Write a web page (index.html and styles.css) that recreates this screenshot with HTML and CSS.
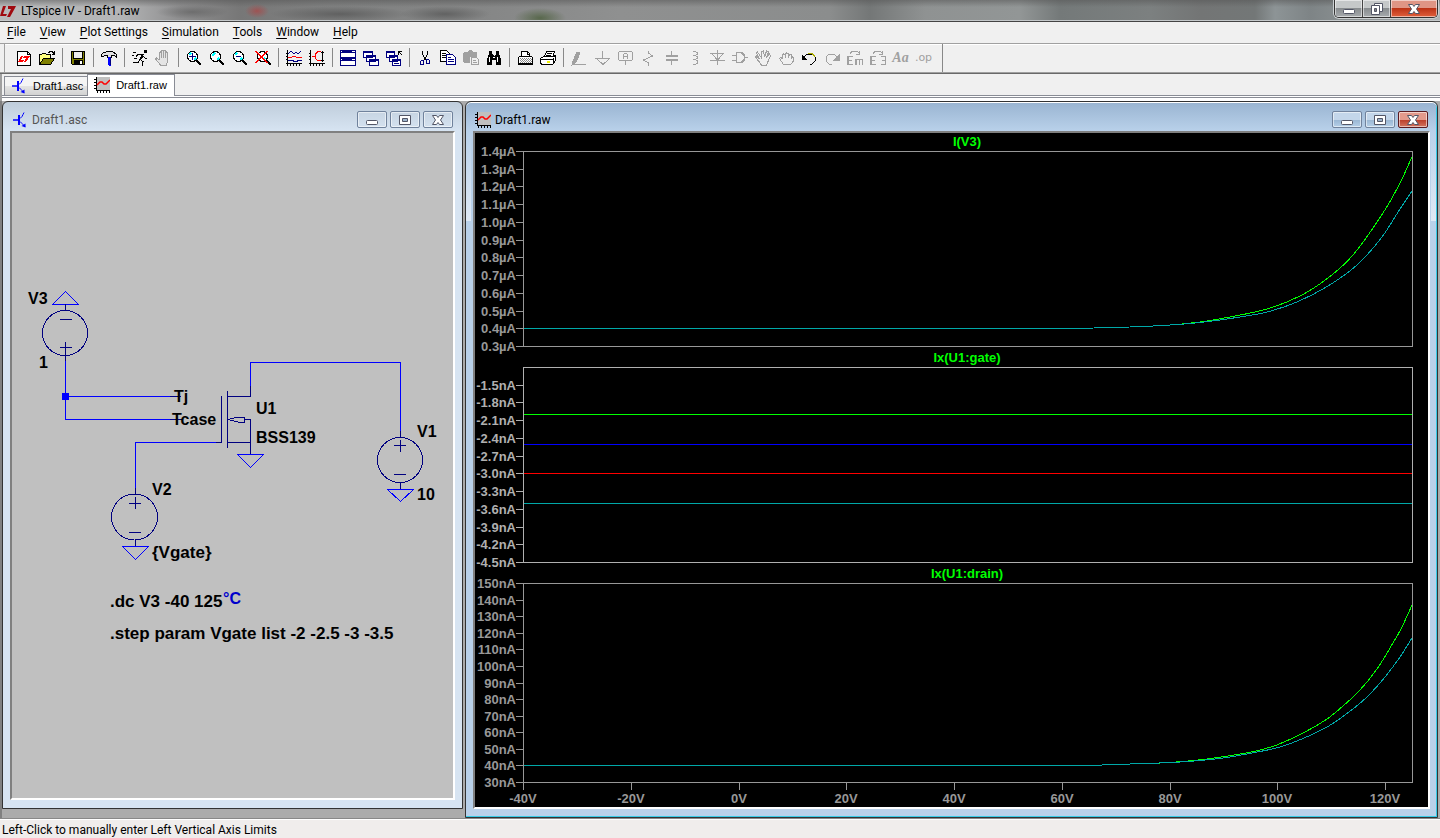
FILE: index.html
```html
<!DOCTYPE html>
<html lang="en">
<head>
<meta charset="utf-8">
<title>LTspice IV - Draft1.raw</title>
<link rel="stylesheet" href="styles.css">
</head>
<body>
<svg class="defs" aria-hidden="true">
  <symbol id="transistor" viewBox="0 0 16 16"><path d="M1 8h5" stroke="#00f" stroke-width="1.500"/><path d="M6 3h2v10H6z" fill="#00f"/><path d="M8 6.500l2-2 1-2 1-2M8 9.500l2 2 3 3" stroke="#00f" fill="none"/><path d="M9.500 14l4 1.500v-4z" fill="#00f"/></symbol>
  <symbol id="waveform" viewBox="0 0 16 16"><path d="M2 0h14v14H2z" fill="#c0c0c0"/><path d="M2.500 0v14M2 13.500h14M0 2.500h2M0 5.500h2M0 8.500h2M0 11.500h2M3.500 14v2M6.500 14v2M9.500 14v2M12.500 14v2M15.500 14v2" stroke="#000"/><path d="M3 8l3-3h2l2 2h2l4-4" fill="none" stroke="red" stroke-width="1.500"/></symbol>
  <symbol id="min" viewBox="0 0 14 12"><rect x="1.500" y="6.500" width="11" height="4" rx="1" fill="#fff" stroke="#535666"/></symbol>
  <symbol id="max" viewBox="0 0 14 12"><path d="M1.500 1.500h11v9h-11z" fill="#fff" stroke="#535666"/><path d="M4.500 4.500h5v3h-5z" fill="#9db4cc" stroke="#535666"/></symbol>
  <symbol id="restore" viewBox="0 0 14 12"><path d="M4.500.5h8v8h-8z" fill="#fff" stroke="#535666"/><path d="M1.500 2.500h8v9h-8z" fill="#fff" stroke="#535666"/><path d="M4.500 5.500h2v3h-2z" fill="#888" stroke="#535666"/></symbol>
  <symbol id="close" viewBox="0 0 14 12"><path d="M1.500 1.500h4L7 3.500l1.500-2h4L9.500 6l3 4.500h-4L7 8.500l-1.500 2h-4l3-4.500z" fill="#fff" stroke="#535666"/></symbol>
</svg>

<header class="titlebar">
  <svg class="logo" viewBox="0 0 16 12" aria-hidden="true"><path d="M3 1h3L3 9h4l-1 2H0zM8 1h8l-1 2-5 9H7l4-8H8z" fill="#a00a10"/></svg>
  <h1>LTspice IV - Draft1.raw</h1>
  <div class="caption main">
    <button aria-label="Minimize"><svg><use href="#min"/></svg></button><button aria-label="Restore"><svg><use href="#restore"/></svg></button><button class="red" aria-label="Close"><svg><use href="#close"/></svg></button>
  </div>
</header>

<nav class="menu">
  <button><u>F</u>ile</button><button><u>V</u>iew</button><button><u>P</u>lot Settings</button><button><u>S</u>imulation</button><button><u>T</u>ools</button><button><u>W</u>indow</button><button><u>H</u>elp</button>
</nav>

<div class="toolbar" role="toolbar" aria-label="Main">
  <button aria-label="New schematic"><svg viewBox="0 0 16 16"><path d="M1.500 1.500h10l3 3v11h-13z" fill="#fff" stroke="#000"/><path d="M11.500 1.500v3h3" fill="none" stroke="#000"/><path d="M5 6h2l-2 4h3l-1 2H2zM8 6h6l-4 6H8l2-4H7z" fill="red"/></svg></button>
  <button aria-label="Open"><svg viewBox="0 0 16 16"><path d="M.5 14.500v-10h2l1-1h3l1 1h4v4" fill="#ffff80" stroke="#000"/><path d="M.5 14.500l4-6h11l-4 6z" fill="#808000" stroke="#000"/><path d="M9 2.500h1l1-1h2l2 2M15.500 1v4M13 4.500h2" fill="none" stroke="#000"/></svg></button>
  <i class="sep"></i>
  <button aria-label="Save"><svg viewBox="0 0 16 16"><path d="M1.500 1.500h13v13h-12l-1-1z" fill="#808000" stroke="#000"/><path d="M4 2h8v6H4z" fill="#efefef"/><path d="M3.500 2v6.500h9V2" fill="none" stroke="#000"/><path d="M4 10h9v5H4z"/><path d="M10 11h2v3h-2z" fill="#fff"/></svg></button>
  <i class="sep"></i>
  <button aria-label="Control panel"><svg viewBox="0 0 16 16"><path d="M.5 6.500v-2l2-2h2l1-1h6l4 3v3l-2-2h-3v2h-4v-2h-3l-1 1z" fill="#e0e0e0" stroke="#000"/><path d="M7 7h3v8l-1 1H8l-1-1z" fill="#00f"/><path d="M9.500 7v8" stroke="#000080"/></svg></button>
  <i class="sep"></i>
  <button aria-label="Run"><svg viewBox="0 0 16 16"><path d="M12 0h3v3h-3z"/><path d="M9 4h3l-2 5-2 1z"/><path d="M10 4.500H6l-2 2M11 6l2 2h2M8 9.500l3 2-1 4M8 9l-2 3.500H1M1 2.500h3M0 5.500h2M2 8.500h3" fill="none" stroke="#000"/></svg></button>
  <button class="off" aria-label="Halt"><svg viewBox="0 0 16 16"><path d="M4.500 10V3l1-1 1 1v5V1l1-1 1 1v7V1l1-1 1 1v7V3l1-1 1 1v8l-1 4h-6l-5-6 1-1 3 2" fill="#e4e4e4"/></svg></button>
  <i class="sep"></i>
  <button aria-label="Zoom in"><svg viewBox="0 0 16 16"><circle cx="6.500" cy="6.500" r="5" fill="#fff" stroke="#000"/><path d="M3 5l2-2M8 10l2-2" stroke="#0ff" stroke-width="2"/><path d="M3 6.500h7M6.500 3v7" stroke="#000080"/><path d="M10 10l5 5" stroke="#000" stroke-width="2.500"/></svg></button>
  <button aria-label="Pan"><svg viewBox="0 0 16 16"><circle cx="6.500" cy="6.500" r="5" fill="#fff" stroke="#000"/><path d="M3 6l3-3M8 10l2-2" stroke="#0ff" stroke-width="1.500"/><path d="M10 10l5 5" stroke="#000" stroke-width="2.500"/></svg></button>
  <button aria-label="Zoom out"><svg viewBox="0 0 16 16"><circle cx="6.500" cy="6.500" r="5" fill="#fff" stroke="#000"/><path d="M3 5l2-2M8 10l2-2" stroke="#0ff" stroke-width="2"/><path d="M4 6.500h5" stroke="#000080"/><path d="M10 10l5 5" stroke="#000" stroke-width="2.500"/></svg></button>
  <button aria-label="Zoom full extents"><svg viewBox="0 0 16 16"><circle cx="7.500" cy="6.500" r="5" fill="#fff" stroke="#000"/><path d="M8 10l2-2" stroke="#0ff" stroke-width="2"/><path d="M11 10l5 5" stroke="#000" stroke-width="2.500"/><path d="M1 1l11 12M12 1L1 13" stroke="red" stroke-width="1.500"/></svg></button>
  <i class="sep"></i>
  <button aria-label="Autorange"><svg viewBox="0 0 16 16"><path d="M1.500 0v16M0 13.500h16M0 3.500h1M0 6.500h1M0 9.500h1M4.500 14v2M7.500 14v2M10.500 14v2M13.500 14v2" stroke="#000"/><path d="M2 4l3-3 3 3 2-2 2 2 3-3" fill="none" stroke="#000080"/><path d="M2 7.500h3l2-1h2l2 1h5" fill="none" stroke="red"/><path d="M2 10.500h5l1 1h3l1-1h4" fill="none" stroke="#000080"/></svg></button>
  <button aria-label="Plot"><svg viewBox="0 0 16 16"><path d="M1.500 0v16M0 13.500h16M0 3.500h1M0 6.500h1M0 9.500h1M4.500 14v2M7.500 14v2M10.500 14v2M13.500 14v2M13.500 1v11M12 2.500h3M12 10.500h3" stroke="#000"/><path d="M12 1.500H9l-3 3v4l3 2h3M3 6.500h3" fill="none" stroke="red"/></svg></button>
  <i class="sep"></i>
  <button aria-label="Tile windows"><svg viewBox="0 0 16 16"><path d="M.5.5h15v15H.5z" fill="#fff" stroke="#000080"/><path d="M0 0h16v3H0zM0 7h16v4H0z" fill="#000080"/><path d="M1 1.500h1M12 1.500h3M1 9.500h1M12 9.500h3" stroke="#fff"/></svg></button>
  <button aria-label="Cascade windows"><svg viewBox="0 0 16 16"><g fill="#fff" stroke="#000080"><path d="M.5 1.500h9v6h-9zM3.500 5.500h9v6h-9zM6.500 9.500h9v6h-9z"/></g><path d="M0 1h10v2H0zM3 5h10v2H3zM6 9h10v2H6z" fill="#000080"/></svg></button>
  <button aria-label="Close windows"><svg viewBox="0 0 16 16"><g fill="#fff" stroke="#000080"><path d="M.5 1.500h8v6h-8zM3.500 5.500h8v6h-8zM6.500 9.500h8v6h-8z"/></g><path d="M0 1h9v2H0zM3 5h9v2H3zM6 9h9v2H6z" fill="#000080"/><path d="M12.500 5V1.500H16M12 1l4 4" stroke="#000" fill="none"/><path d="M8 13.500h5" stroke="#000080"/></svg></button>
  <i class="sep"></i>
  <button aria-label="Cut"><svg viewBox="0 0 16 16"><path d="M5.500 1v3l3 6M10.500 1v3l-3 6" fill="none" stroke="#000"/><path d="M4.500 10.500h2v4h-3v-3zM9.500 9.500h2l1 1v3h-3z" fill="none" stroke="#000080"/></svg></button>
  <button aria-label="Copy"><svg viewBox="0 0 16 16"><path d="M.5.5h6l3 3v8h-9z" fill="#fff" stroke="#000"/><path d="M2 3.500h4M2 5.500h5M2 7.500h5" stroke="#000"/><path d="M6.500 4.500h6l3 3v7h-9z" fill="#fff" stroke="#000080"/><path d="M8 7.500h3M8 9.500h6M8 11.500h6" stroke="#000080"/></svg></button>
  <button aria-label="Paste" disabled><svg viewBox="0 0 16 16"><path d="M0 3l1-1h4l1-2h3l1 2h3l1 1v4H7v6H1l-1-1z" fill="#a0a0a0"/><path d="M8.500 7.500h5l2 2v5h-7zM10 10.500h3M10 12.500h4" fill="#efefef" stroke="#a0a0a0"/></svg></button>
  <button aria-label="Find"><svg viewBox="0 0 16 16"><path d="M3 1h3v3l2 2 2-2V1h3v3l2 5v6h-5v-5H6v5H1V9l2-5z"/><path d="M3.500 7v5M11.500 7v5M7 7.500h2" stroke="#fff"/></svg></button>
  <i class="sep"></i>
  <button aria-label="Print setup"><svg viewBox="0 0 16 16"><path d="M1.500 7.500l3-2v-4h6l2 2v2l3 2v7h-14z" fill="#fff" stroke="#000"/><path d="M2 6.500h12M10.500 2v2h2M2 13.500h13" stroke="#000" fill="none"/><path d="M3 8.500h11M3 10.500h11M3 12.500h11" stroke="#888" stroke-dasharray="1 1"/><path d="M4 9.500h11M4 11.500h11" stroke="#888" stroke-dasharray="1 1"/></svg></button>
  <button aria-label="Print"><svg viewBox="0 0 16 16"><path d="M4.500 6.500l2-5h8l-2 6" fill="#fff" stroke="#000"/><path d="M.5 8.500l3-2h10l2-1v5l-3 4h-10l-2-1z" fill="#fff" stroke="#000"/><path d="M1 9.500h12M7 3.500h5M6 5.500h5M3 14.500h9M13.500 8v6" stroke="#000"/><path d="M7 11h3v2H7z" fill="#ee0"/></svg></button>
  <i class="sep"></i>
  <button class="off" aria-label="Wire"><svg viewBox="0 0 16 16"><path d="M2 11l4-9 3 1-4 9-4 3z" fill="#a0a0a0"/><path d="M1 14.500h14"/></svg></button>
  <button class="off" aria-label="Ground"><svg viewBox="0 0 16 16"><path d="M8.500 1v7M1 8.500h15M3 9l6 5.500L15 9"/></svg></button>
  <button class="off" aria-label="Label net"><svg viewBox="0 0 16 16"><path d="M2.500 1.500h12l1 1v7l-1 1h-12l-1-1v-7zM8.500 11v4"/><path d="M6.500 9V4.500l1-1h2l1 1V9M6 6.500h4"/></svg></button>
  <button class="off" aria-label="Resistor"><svg viewBox="0 0 16 16"><path d="M8.500 1v2l4 3-9 4 5 3v3"/></svg></button>
  <button class="off" aria-label="Capacitor"><svg viewBox="0 0 16 16"><path d="M8.500 1v5M8.500 11v4"/><path d="M3 6h12M3 10h12" stroke-width="2"/></svg></button>
  <button class="off" aria-label="Inductor"><svg viewBox="0 0 16 16"><path d="M7 1.500h2l2 1v2l-2 1H7M9 5.500l2 1v2l-2 1H7M9 9.500l2 1v3l-2 1H7"/></svg></button>
  <button class="off" aria-label="Diode"><svg viewBox="0 0 16 16"><path d="M1 3.500h14M3 4l5.500 6L14 4M1 10.500h15M8.500 0v15" /></svg></button>
  <button class="off" aria-label="Component"><svg viewBox="0 0 16 16"><path d="M0 5.500h4M0 10.500h4M4.500 2.500h5l3 3v4l-3 3h-5zM13 7.500h3" stroke-width="1.500"/></svg></button>
  <button class="off" aria-label="Move"><svg viewBox="0 0 16 16"><path d="M6.500 15l-6-8 1-1 3 3-3-6 1-1 4 6V2l2-1 1 6 2-6 2 1-2 6 3-4 1 2-4 9z"/></svg></button>
  <button class="off" aria-label="Drag"><svg viewBox="0 0 16 16"><path d="M5.500 14.500l-4-6 1-1 2 1V5l1-1 2 1v3V4l1-1 2 1v4l1-4h1l1 1v3l1-1 1 1v3l-3 4z"/></svg></button>
  <button aria-label="Undo"><svg viewBox="0 0 16 16"><path d="M3 7l3-3h5l3 3v4l-3 3H9" fill="none" stroke="#000"/><path d="M7 3.500h4l3 3" stroke="#aa0" fill="none"/><path d="M1 5v5h5z"/></svg></button>
  <button class="off" aria-label="Redo"><svg viewBox="0 0 16 16"><path d="M13 7l-3-3H5L2 7v4l3 3h3"/><path d="M15 5v5h-5z" fill="#a0a0a0"/></svg></button>
  <button class="off" aria-label="Rotate"><svg viewBox="0 0 16 16"><path d="M3 3.500l2-2h5l3 2M12.500 1v3H9"/><path d="M6 6.500H1v8h5M1 10.500h4M16 9.500H9M9 9v6M12.500 10v5M15.500 10v5" stroke-width="1.500"/></svg></button>
  <button class="off" aria-label="Mirror"><svg viewBox="0 0 16 16"><path d="M3 3.500l2-2h5l3 2M12.500 1v3H9"/><path d="M6 6.500H1v8h5M1 10.500h4M11 6.500h5v8h-5M12 10.500h4" stroke-width="1.500"/></svg></button>
  <button class="off aa" aria-label="Text">Aa</button>
  <button class="off op" aria-label="SPICE directive">.op</button>
  <i class="sep end"></i>
</div>

<div class="tabs" role="tablist">
  <button role="tab" aria-selected="false"><svg><use href="#transistor"/></svg>Draft1.asc</button>
  <button role="tab" aria-selected="true"><svg><use href="#waveform"/></svg>Draft1.raw</button>
</div>

<main class="mdi">
  <section class="win back">
    <div class="wintitle">
      <svg class="doc"><use href="#transistor"/></svg><h2>Draft1.asc</h2>
      <div class="caption"><button aria-label="Minimize"><svg><use href="#min"/></svg></button><button aria-label="Maximize"><svg><use href="#max"/></svg></button><button aria-label="Close"><svg><use href="#close"/></svg></button></div>
    </div>
    <div class="client">
      <svg class="schematic" viewBox="12 133 441 665" preserveAspectRatio="xMinYMin meet" role="img" aria-label="Schematic">
        <g class="wire">
          <path d="M65.500 355v64.500H174M65.500 396.500H174M250.500 387v-24.500h150V432M135.500 489v-46.500H216"/>
          <path d="M52.500 304.500h26l-13-13zM122.500 546.500h26l-13 13zM237.500 454.500h26l-13 13zM387.500 489.500h26l-13 12z"/>
        </g>
        <path d="M62 393h7v7h-7z" fill="#00f"/>
        <g class="part">
          <circle cx="65" cy="333" r="22.500"/><circle cx="134.500" cy="517" r="23"/><circle cx="400" cy="460" r="22.500"/>
          <path d="M65.500 304v6M60 319.500h12M60 347.500h12M65.500 342v19M170 396.500h11M170 419.500h13"/>
          <path d="M135.500 488v6M135.500 540v6M129 503.500h12M135.500 497v12M129 532.500h12"/>
          <path d="M400.500 431v6M400.500 483v6M394 445.500h12M400.500 440v12M394 474.500h12"/>
          <path d="M216 442.500h5.500V396M227.500 391v57M227 396.500h23.500V386M227 442.500h23.500M250.500 454v-34.500h-6M228 419.500l10 2.500h6.500v-5H238z"/>
        </g>
        <g class="label">
          <text x="28" y="304">V3</text><text x="39" y="368">1</text>
          <text x="174" y="402">Tj</text><text x="172" y="425">Tcase</text>
          <text x="256" y="414">U1</text><text x="256" y="443">BSS139</text>
          <text x="417" y="437">V1</text><text x="417" y="500">10</text>
          <text x="152" y="495">V2</text><text x="152" y="558" class="directive">{Vgate}</text>
          <text x="110" y="607" class="directive">.dc V3 -40 125</text><text x="223" y="604" class="unit">°C</text>
          <text x="110" y="639" class="directive">.step param Vgate list -2 -2.5 -3 -3.5</text>
        </g>
      </svg>
    </div>
  </section>

  <section class="win front">
    <div class="wintitle">
      <svg class="doc"><use href="#waveform"/></svg><h2>Draft1.raw</h2>
      <div class="caption"><button aria-label="Minimize"><svg><use href="#min"/></svg></button><button aria-label="Maximize"><svg><use href="#max"/></svg></button><button class="red" aria-label="Close"><svg><use href="#close"/></svg></button></div>
    </div>
    <div class="client black">
      <svg id="plots" class="plots" viewBox="475 133 953 674" preserveAspectRatio="xMinYMin meet" role="img" aria-label="Waveforms"></svg>
    </div>
  </section>
</main>

<footer class="status">Left-Click to manually enter Left Vertical Axis Limits</footer>
<script src="plots.js"></script>
</body>
</html>
```
FILE: styles.css
```css
* { box-sizing: border-box; }
body { margin: 0; min-height: 100vh; display: flex; flex-direction: column; background: #f0f0f0; color: #000; font: 12px/16px Roboto, sans-serif; overflow: hidden; }
button { margin: 0; padding: 0; border: 0; background: none; font: inherit; color: inherit; }
h1, h2 { margin: 0; font: inherit; white-space: nowrap; }
svg { display: block; }
.defs { display: none; }

.titlebar { height: 22px; display: flex; align-items: center; gap: 5px; border-bottom: 1px solid #444; box-shadow: inset 0 -1px #c4c8ca;
  background:
    radial-gradient(ellipse 12px 7px at 257px 11px, #b04040aa, transparent),
    radial-gradient(ellipse 36px 7px at 192px 12px, #5558, transparent),
    radial-gradient(ellipse 70px 8px at 340px 14px, #4448, transparent),
    radial-gradient(ellipse 45px 8px at 445px 14px, #4448, transparent),
    radial-gradient(ellipse 26px 10px at 540px 18px, #58684c, transparent),
    linear-gradient(#5558, transparent 7px),
    linear-gradient(90deg, #b9babb, #b4b5b6 120px, #8e8e8f 180px, #777 240px, #808181 330px, #858686 480px, #8f9090 620px, #8b8d8d 830px, #747777 870px, #8f9292 925px, #929696 1020px, #747979 1060px, #7c8080 1150px, #737575 1200px, #737777 1255px, #8d9496 1275px, #7e8486 1310px, #999fa0 1400px, #b0b4b5); }
.logo { width: 16px; height: 12px; }
.titlebar .caption { margin-left: auto; }

.caption { display: flex; gap: 3px; }
.caption button { width: 30px; height: 17px; display: grid; place-items: center; border: 1px solid #70829c; border-radius: 2px; box-shadow: inset 0 0 0 1px #ffffff88; }
.caption svg { width: 14px; height: 12px; }
.front .caption button { background: linear-gradient(#c3d6ea 50%, #98b5d2 50%, #b5cfe8); }
.caption .red, .front .caption .red { border-color: #5a1a20; background: linear-gradient(#e39a8c 50%, #b93a26 50%, #d27460); }
.caption.main { gap: 0; align-self: flex-start; margin-right: 2px; border: 1px solid #333; border-top: 0; border-radius: 0 0 5px 5px; overflow: hidden; box-shadow: 0 0 0 1px #ccd0d2; }
.caption.main button { width: 28px; border: 0; border-right: 1px solid #444; border-radius: 0; background: linear-gradient(#c5c8c9 45%, #85898c 45%, #a7abad); }
.caption.main .red { width: 46px; border: 0; background: linear-gradient(#df9585 45%, #b92f13 45%, #e0603c); }

.menu { height: 22px; display: flex; border-bottom: 1px solid #a0a0a0; box-shadow: 0 1px #fff; }
.menu button { padding: 0 7px; height: 20px; }
.menu u { text-underline-offset: 2px; }

.toolbar { height: 30px; display: flex; align-items: center; padding: 0 0 2px 12px; border-bottom: 1px solid #696969; box-shadow: inset 0 -1px #a0a0a0, inset 4px 0 #f0f0f0, inset 5px 0 #a0a0a0; }
.toolbar button { width: 23px; height: 23px; display: grid; place-items: center; flex: none; }
.toolbar svg { width: 16px; height: 16px; shape-rendering: crispEdges; }
.off, .toolbar button:disabled { color: #a0a0a0; }
.off svg { fill: none; stroke: #a0a0a0; }
.aa { font: italic bold 14px/20px "Liberation Serif", serif; }
.op { font: 11px/20px "DejaVu Sans", sans-serif; }
.sep { width: 8px; height: 19px; display: flex; justify-content: center; flex: none; }
.sep::before { content: ""; width: 1px; background: #888; }
.sep.end { height: 28px; margin-left: 3px; }

.tabs { height: 27px; display: flex; align-items: flex-end; padding: 0 4px 4px; border-left: 2px solid #a0a0a0; font: 11px/16px "Liberation Sans", Arial, sans-serif; background: linear-gradient(#898c95, #898c95) 0 21px / 100% 1px no-repeat, linear-gradient(#898c95, #898c95) 0 23px / 100% 1px no-repeat, linear-gradient(#fff, #fff) 0 22px / 100% 5px no-repeat; }
.tabs button { display: flex; align-items: center; gap: 6px; height: 20px; margin-bottom: 1px; padding: 0 4px 0 6px; border: 1px solid #898c95; border-right: 0; background: linear-gradient(#f4f4f4 50%, #e4e4e4 50%, #d2d2d2); }
.tabs [aria-selected="true"] { height: 22px; background: #fff; padding-right: 7px; border-right: 1px solid #898c95; border-bottom: 0; padding-bottom: 2px; }
.tabs button:first-child { margin-left: -2px; }
.tabs svg { width: 16px; height: 16px; }

.mdi { flex: 1; display: grid; grid-template-columns: 461fr 973fr; column-gap: 2px; padding-right: 2px; border-left: 2px solid #808080; background: #ababab; }
.win { display: flex; flex-direction: column; min-width: 0; padding: 0 7px 8px; border: 1px solid #333; border-radius: 6px 6px 0 0; }
.back { margin-bottom: 9px; color: #555; background: linear-gradient(#bfcddb, #d7e4f2 29px); }
.front { background: linear-gradient(#b9d1ea00, #dfe9f5) 0 29px / 5px 90px no-repeat, linear-gradient(#b9d1ea00, #dfe9f5) right 1px top 29px / 5px 90px no-repeat, linear-gradient(#99b4d1, #b9d1ea 29px); box-shadow: inset 0 1px #fff, inset -1px -1px #36cae6; }
.wintitle { height: 29px; display: flex; align-items: center; padding: 6px 2px 0; }
.wintitle h2 { margin-left: 4px; }
.wintitle .caption { margin-left: auto; }
.doc { width: 16px; height: 16px; }
.client { flex: 1; min-height: 0; border: 2px solid; border-color: #808080 #fff #fff #808080; background: #c0c0c0; }
.client.black { background: #000; }
.schematic, .plots { width: 100%; height: auto; }
.wire, .part { fill: none; stroke: #00f; shape-rendering: crispEdges; }
.part { stroke: #000080; }
.label { font: bold 16px "Liberation Sans", Arial, sans-serif; fill: #000; }
.label .unit { fill: #00c; }
.label .directive { font-size: 17px; }

.plots { font: bold 13px "Liberation Sans", Arial, sans-serif; }
.axis { fill: none; stroke: #989898; shape-rendering: crispEdges; }
.tick { fill: #989898; text-anchor: end; }
.bright .axis { stroke: #b0b0b0; }
.bright .tick { fill: #b0b0b0; }
.tick.x, .name { text-anchor: middle; }
.name { fill: #0f0; }
.trace { fill: none; shape-rendering: crispEdges; }

.status { height: 20px; padding: 1px 2px 0; border-top: 1px solid #888; background: #f0edec; box-shadow: inset 0 1px #fff; line-height: 20px; }
```
FILE: plots.js
```javascript
const NS = "http://www.w3.org/2000/svg";
const svg = document.getElementById("plots");
const LEFT = 523, RIGHT = 1412;

function add(parent, tag, attrs, text) {
  const el = document.createElementNS(NS, tag);
  for (const key in attrs) el.setAttribute(key, attrs[key]);
  if (text) el.textContent = text;
  parent.appendChild(el);
  return el;
}

// Catmull-Rom spline through the samples
function spline(p) {
  let d = `M${p[0]}`;
  for (let i = 0; i < p.length - 1; i++) {
    const a = p[i - 1] || p[i], b = p[i], c = p[i + 1], e = p[i + 2] || c;
    const k = (c[0] - b[0]) / 3;
    const s1 = (c[1] - a[1]) / (c[0] - a[0]), s2 = (e[1] - b[1]) / (e[0] - b[0]);
    d += `C${b[0] + k},${b[1] + s1 * k} ${c[0] - k},${c[1] - s2 * k} ${c}`;
  }
  return d;
}

const panes = [
  { name: "I(V3)", top: 151, bottom: 346, first: 151, last: 346,
    labels: ["1.4µA", "1.3µA", "1.2µA", "1.1µA", "1.0µA", "0.9µA", "0.8µA", "0.7µA", "0.6µA", "0.5µA", "0.4µA", "0.3µA"],
    traces: [
      ["#0f0", [[524, 328.5], [1060, 328.5], [1130, 327], [1170, 325], [1200, 322], [1227, 317.5], [1267, 309], [1300, 296], [1328, 278], [1353, 255], [1383, 213], [1400, 183], [1412, 157]]],
      ["#00a8a8", [[524, 328.5], [1060, 328.5], [1130, 327], [1170, 325], [1200, 322.5], [1237, 317.5], [1267, 312], [1297, 302], [1328, 286], [1357, 265], [1382, 237], [1400, 209], [1412, 191]]]] },
  { name: "Ix(U1:gate)", top: 367, bottom: 562, first: 384.5, last: 562, bright: true,
    labels: ["-1.5nA", "-1.8nA", "-2.1nA", "-2.4nA", "-2.7nA", "-3.0nA", "-3.3nA", "-3.6nA", "-3.9nA", "-4.2nA", "-4.5nA"],
    traces: [["#0f0", [[524, 414.5], [1412, 414.5]]], ["#00f", [[524, 444.5], [1412, 444.5]]], ["#f00", [[524, 473.5], [1412, 473.5]]], ["#00a8a8", [[524, 503.5], [1412, 503.5]]]] },
  { name: "Ix(U1:drain)", top: 583, bottom: 782, first: 583, last: 782,
    labels: ["150nA", "140nA", "130nA", "120nA", "110nA", "100nA", "90nA", "80nA", "70nA", "60nA", "50nA", "40nA", "30nA"],
    traces: [
      ["#0f0", [[524, 765.5], [1080, 765.5], [1130, 764], [1170, 762.5], [1207, 759], [1240, 754], [1260, 750], [1278, 744.5], [1303, 733], [1327, 719], [1343, 706], [1360, 690], [1377, 669], [1393, 643], [1402, 627], [1412, 605]]],
      ["#00a8a8", [[524, 765.5], [1080, 765.5], [1130, 764], [1180, 762], [1223, 758], [1260, 751.5], [1280, 747], [1303, 738.5], [1327, 727], [1347, 713.5], [1367, 697], [1385, 677], [1400, 657], [1412, 638]]]] }
];

for (const pane of panes) {
  const g = add(svg, "g", pane.bright ? { class: "bright" } : {});
  const step = (pane.last - pane.first) / (pane.labels.length - 1);
  let axis = `M${LEFT + 0.5} ${pane.top + 0.5}H${RIGHT + 0.5}V${pane.bottom + 0.5}H${LEFT + 0.5}Z`;
  pane.labels.forEach((label, i) => {
    const y = Math.round(pane.first + i * step);
    axis += `M516 ${y + 0.5}h8`;
    add(g, "text", { class: "tick", x: 516, y: y + 5 }, label);
  });
  add(g, "path", { class: "axis", d: axis });
  add(g, "text", { class: "name", x: 967, y: pane.top - 5 }, pane.name);
  for (const [stroke, points] of pane.traces) add(g, "path", { class: "trace", stroke, d: spline(points) });
}

let xTicks = "";
for (let volts = -40; volts <= 120; volts += 20) {
  const x = Math.round(LEFT + (volts + 40) * (RIGHT - LEFT) / 165);
  xTicks += `M${x + 0.5} 782v8`;
  add(svg, "text", { class: "tick x", x, y: 803 }, `${volts}V`);
}
add(svg, "path", { class: "axis", d: xTicks });
```
